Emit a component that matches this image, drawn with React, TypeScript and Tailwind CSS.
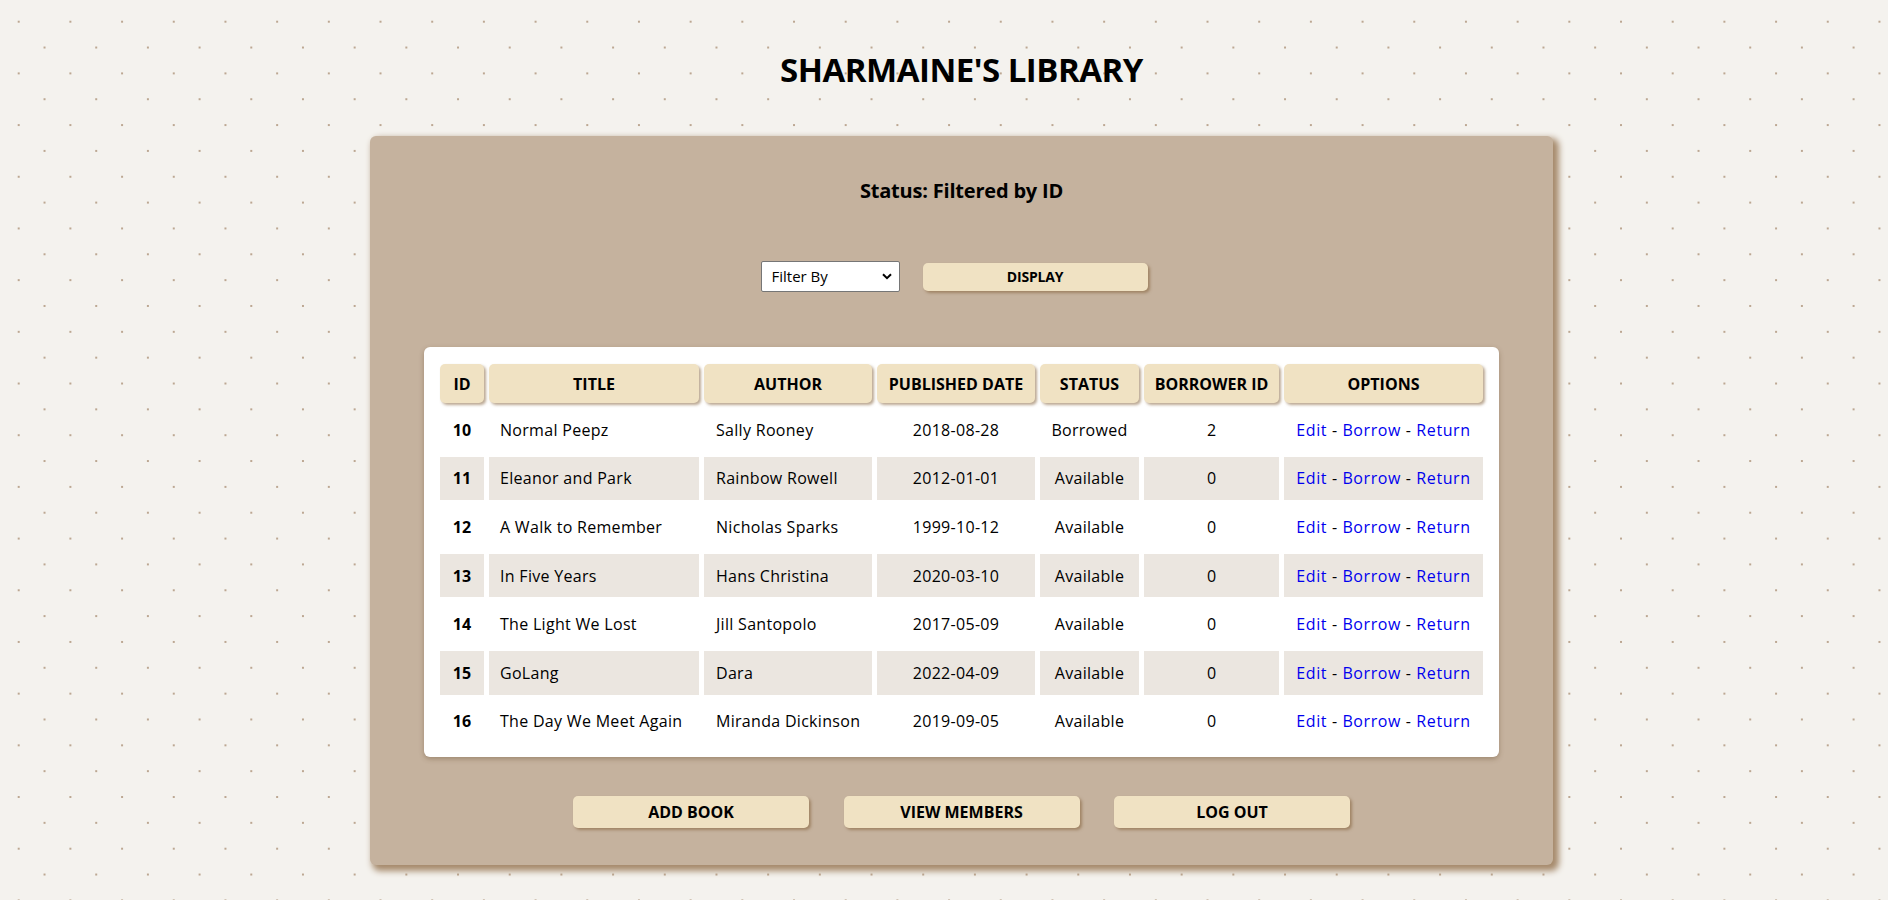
import React from "react";

type Book = {
  id: number;
  title: string;
  author: string;
  date: string;
  status: string;
  borrower: number;
};

const books: Book[] = [
  { id: 10, title: "Normal Peepz", author: "Sally Rooney", date: "2018-08-28", status: "Borrowed", borrower: 2 },
  { id: 11, title: "Eleanor and Park", author: "Rainbow Rowell", date: "2012-01-01", status: "Available", borrower: 0 },
  { id: 12, title: "A Walk to Remember", author: "Nicholas Sparks", date: "1999-10-12", status: "Available", borrower: 0 },
  { id: 13, title: "In Five Years", author: "Hans Christina", date: "2020-03-10", status: "Available", borrower: 0 },
  { id: 14, title: "The Light We Lost", author: "Jill Santopolo", date: "2017-05-09", status: "Available", borrower: 0 },
  { id: 15, title: "GoLang", author: "Dara", date: "2022-04-09", status: "Available", borrower: 0 },
  { id: 16, title: "The Day We Meet Again", author: "Miranda Dickinson", date: "2019-09-05", status: "Available", borrower: 0 },
];

const thBase =
  "h-[39px] p-0 bg-[#f0e2c3] rounded-[5px] shadow-[2px_2px_3px_rgba(130,95,55,0.55)] text-[16px] font-bold text-center align-middle";

const btn =
  "bg-[#f0e2c3] rounded-[5px] shadow-[2px_2px_3px_rgba(130,95,55,0.55)] font-bold text-black";

export default function App() {
  return (
    <div className="min-h-screen w-full bg-[#f4f2ee] [background-image:radial-gradient(circle,#bca792_0.9px,transparent_1.4px),radial-gradient(circle,#bca792_0.9px,transparent_1.4px)] [background-size:51.7px_51.7px] [background-position:-7.15px_-4.15px,18.7px_21.7px] pl-[35px] pt-[50px] pb-[20px] font-['Open_Sans',sans-serif] text-black">
      <h1 className="text-center text-[33px] leading-[40px] font-bold tracking-[-0.5px]">SHARMAINE'S LIBRARY</h1>

      <div className="mx-auto mt-[46px] w-[1183px] h-[729px] rounded-[6px] bg-[#c5b29e] shadow-[4px_4px_6px_2px_#a68a6c] pt-[41px] flex flex-col items-center">
        <h3 className="text-[20px] leading-[28px] font-bold tracking-[-0.2px]">Status: Filtered by ID</h3>

        <div className="mt-[56px] mr-[15px] flex items-center gap-[23px]">
          <div className="relative w-[139px] h-[31px]">
            <select className="appearance-none w-full h-full bg-white border border-[#767676] rounded-[2px] pl-[10px] text-[15px] text-black outline-none">
              <option>Filter By</option>
              <option>ID</option>
              <option>Title</option>
            </select>
            <svg
              className="pointer-events-none absolute right-[8px] top-[12px]"
              width="10"
              height="7"
              viewBox="0 0 10 7"
              fill="none"
            >
              <path d="M1 1.2 L5 5.2 L9 1.2" stroke="#000" strokeWidth="2" />
            </svg>
          </div>
          <button className={`${btn} w-[225px] h-[28px] text-[14px] tracking-[-0.2px]`}>DISPLAY</button>
        </div>

        <div className="mt-[55px] w-[1075px] bg-white rounded-[6px] shadow-[0_2px_5px_rgba(90,60,30,0.35)] pt-[12px] pb-[9px] px-[11px]">
          <table className="w-full table-fixed border-separate border-spacing-[5px] text-[16px]">
            <thead>
              <tr>
                <th className={`${thBase} w-[44px]`}>ID</th>
                <th className={`${thBase} w-[210px]`}>TITLE</th>
                <th className={`${thBase} w-[168px]`}>AUTHOR</th>
                <th className={`${thBase} w-[158px]`}>PUBLISHED DATE</th>
                <th className={`${thBase} w-[99px]`}>STATUS</th>
                <th className={`${thBase} w-[135px]`}>BORROWER ID</th>
                <th className={thBase}>OPTIONS</th>
              </tr>
            </thead>
            <tbody>
              {books.map((b, i) => {
                const bg = i % 2 === 1 ? "bg-[#ebe6e0]" : "bg-white";
                const td = `${bg} h-[43.6px] p-0 align-middle`;
                return (
                  <tr key={b.id}>
                    <td className={`${td} text-center font-bold`}>{b.id}</td>
                    <td className={`${td} text-left pl-[11px] tracking-[0.3px]`}>{b.title}</td>
                    <td className={`${td} text-left pl-[12px] tracking-[0.3px]`}>{b.author}</td>
                    <td className={`${td} text-center tracking-[0.3px]`}>{b.date}</td>
                    <td className={`${td} text-center tracking-[0.3px]`}>{b.status}</td>
                    <td className={`${td} text-center`}>{b.borrower}</td>
                    <td className={`${td} text-center tracking-[0.6px]`}>
                      <a href="#" className="text-[#0000ee]">Edit</a>
                      {" - "}
                      <a href="#" className="text-[#0000ee]">Borrow</a>
                      {" - "}
                      <a href="#" className="text-[#0000ee]">Return</a>
                    </td>
                  </tr>
                );
              })}
            </tbody>
          </table>
        </div>

        <div className="mt-[39px] flex gap-[34.5px]">
          <button className={`${btn} w-[236px] h-[32px] text-[16px]`}>ADD BOOK</button>
          <button className={`${btn} w-[236px] h-[32px] text-[16px]`}>VIEW MEMBERS</button>
          <button className={`${btn} w-[236px] h-[32px] text-[16px]`}>LOG OUT</button>
        </div>
      </div>
    </div>
  );
}
